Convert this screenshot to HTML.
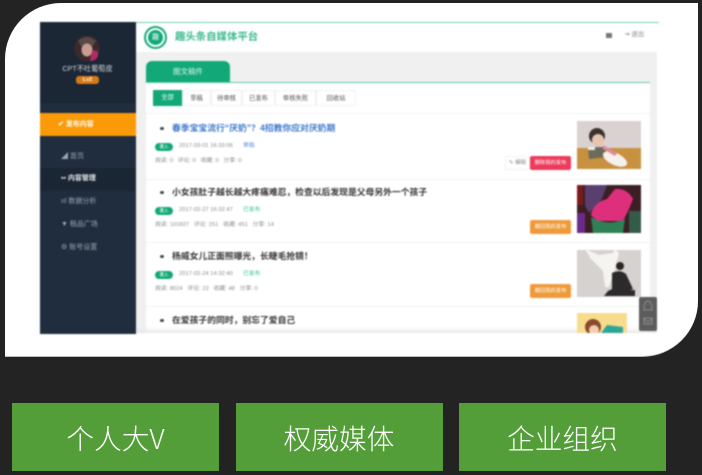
<!DOCTYPE html>
<html lang="zh"><head><meta charset="utf-8"><style>
html,body{margin:0;padding:0;width:702px;height:475px;overflow:hidden;background:#232323}
*{box-sizing:border-box}
body{font-family:"Liberation Sans","Noto Sans CJK SC",sans-serif;position:relative}
div,span{position:absolute;white-space:nowrap}
#card{left:5px;top:3px;width:693px;height:354px;background:#fff;border-radius:56px 0 56px 0;border-bottom:1px solid #bbb}
#shot{left:0;top:0;width:702px;height:357px;filter:blur(.8px)}
.t{font-weight:bold;font-size:8.8px;line-height:12px;color:#333;left:172px}
.m{font-size:5.8px;line-height:7px;color:#8a8a8a}
.g{left:155px;width:18px;height:8px;border-radius:4px;background:#12a878;color:#fff;font-size:4.5px;line-height:8px;text-align:center}
.dot{left:160px;width:4px;height:2.5px;border-radius:50%;background:#444}
.hr{left:146px;width:504px;height:1px;background:#f2f2f2}
.f{top:90px;height:16px;font-size:6.3px;line-height:16px;text-align:center;color:#555;border:1px solid #f0f0f0}
.n{left:61px;font-size:7px;line-height:9px;color:#9aa5b1}
.b{left:530px;width:41px;height:14px;border-radius:2px;background:#ef9a3a;color:#fff;font-size:5.3px;line-height:14px;text-align:center}
.big{top:403px;width:207px;height:68px;background:#539e38;color:#fff;font-size:27.7px;line-height:68px;text-align:center;font-weight:300;font-family:"WenQuanYi Zen Hei","Noto Sans CJK SC",sans-serif}
</style></head><body>
<div id="card"></div>
<div id="shot">
<div style="left:135px;top:22px;width:524px;height:30px;background:#fff;border-top:1px solid #6fd0b0"></div>
<div style="left:135px;top:52px;width:522px;height:281px;background:#f0f0f0"></div>
<div style="left:146px;top:83px;width:504px;height:250px;background:#fff"></div>
<div style="left:135px;top:327px;width:522px;height:6px;background:linear-gradient(#fff0,#e8e8e8)"></div>

<div style="left:39.5px;top:22px;width:96px;height:311.5px;background:#1f2d3e"></div>
<div style="left:39.5px;top:22px;width:96px;height:81px;background:#1b2735"></div>
<div style="left:39.5px;top:113px;width:96px;height:23px;background:#fb9a08"></div>
<div style="left:39.5px;top:168px;width:96px;height:23px;background:#1a2634"></div>
<svg style="position:absolute;left:74px;top:35px" width="26" height="27" viewBox="0 0 26 27"><circle cx="13" cy="13.5" r="13" fill="#3a2a2c"/><path d="M4 6Q13-2 22 6L18 12 8 12Z" fill="#5a4a44"/><ellipse cx="13" cy="15" rx="5.5" ry="6.5" fill="#c99c90"/><path d="M18 16Q25 14 24 20T16 26Z" fill="#b32a66"/></svg>
<div style="left:39.5px;top:64px;width:96px;text-align:center;font-size:7.2px;line-height:9px;color:#d5dae0">CPT不吐葡萄皮</div>
<div style="left:76px;top:75.5px;width:23px;height:8px;border-radius:3px;background:#d9791a;color:#ffe;font-size:5.5px;line-height:8px;text-align:center;font-weight:bold">Lv2</div>
<div style="left:58px;top:120px;font-size:7px;line-height:9px;color:#fff;font-weight:bold">✔ 发布内容</div>
<div class="n" style="top:152px">◢ 首页</div>
<div class="n" style="top:174px;color:#e6e9ec;font-weight:bold">▪▪ 内容管理</div>
<div class="n" style="top:197px">ııl 数据分析</div>
<div class="n" style="top:220px">▼ 租品广场</div>
<div class="n" style="top:243px">⚙ 账号设置</div>

<div style="left:144px;top:26px;width:23px;height:23px;border-radius:50%;border:2.5px solid #12a878;background:#fff"></div>
<div style="left:148px;top:30px;width:15px;height:15px;border-radius:50%;background:#12a878"></div>
<div style="left:152px;top:33px;font-size:7px;line-height:9px;color:#bfeadb;font-weight:bold">趣</div>
<div style="left:175px;top:31px;font-size:10.4px;line-height:14px;color:#3bb98f;font-weight:bold">趣头条自媒体平台</div>
<div style="left:606px;top:33px;width:6px;height:5px;background:#777"></div>
<div style="left:624px;top:31px;font-size:6.5px;line-height:8px;color:#888">⇥ 退出</div>

<div style="left:146px;top:61px;width:84px;height:21px;background:#12a878;border-radius:6px 6px 0 0;color:#dff5ec;font-size:7.5px;line-height:21px;text-align:center">图文稿件</div>
<div style="left:146px;top:81.5px;width:504px;height:1.5px;background:#5fcba8"></div>

<div class="f" style="left:153px;width:29px;background:#12a878;color:#fff;border:0">全部</div>
<div class="f" style="left:182px;width:29px">草稿</div>
<div class="f" style="left:211px;width:31px">待审核</div>
<div class="f" style="left:242px;width:33px">已发布</div>
<div class="f" style="left:275px;width:41px">审核失败</div>
<div class="f" style="left:316px;width:40px">回收站</div>
<div class="hr" style="top:113px"></div>
<div class="hr" style="top:179px"></div>
<div class="hr" style="top:242px"></div>
<div class="hr" style="top:306px"></div>

<div class="dot" style="top:127px"></div>
<div class="t" style="top:122px;color:#3f78c9">春季宝宝流行“厌奶”？4招教你应对厌奶期</div>
<div class="g" style="top:143px">署入</div>
<div class="m" style="left:179px;top:143px">2017-03-01 16:33:06</div>
<div class="m" style="left:243px;top:143px;color:#5b8fd8">草稿</div>
<div class="m" style="left:155px;top:158px">阅读: 0 &nbsp; 评论: 0 &nbsp; 收藏: 0 &nbsp; 分享: 0</div>
<div style="left:505px;top:156px;width:25px;height:14px;border:1px solid #f0f0f0;font-size:5.5px;line-height:12px;text-align:center;color:#888">✎ 编辑</div>
<div class="b" style="top:156px;background:#ed3b5c">删除我的发布</div>
<svg style="position:absolute;left:577px;top:121px" width="64" height="48" viewBox="0 0 64 48"><rect width="64" height="48" fill="#d9d2d0"/><rect y="27" width="64" height="21" fill="#c8913f"/><circle cx="20" cy="15" r="8" fill="#3b3230"/><ellipse cx="21" cy="19" rx="6" ry="6" fill="#e8c3ae"/><path d="M11 26H28L30 36 12 38Z" fill="#6b6b58"/><path d="M11 26H18V29H11Z" fill="#f0ede6"/><ellipse cx="38" cy="38" rx="13" ry="6" fill="#f5f1ed" transform="rotate(25 38 38)"/><path d="M26 24L40 32 38 35 26 28Z" fill="#e08a98"/></svg>

<div class="dot" style="top:191px"></div>
<div class="t" style="top:186px">小女孩肚子越长越大疼痛难忍，检查以后发现是父母另外一个孩子</div>
<div class="g" style="top:206.5px">署入</div>
<div class="m" style="left:179px;top:207px">2017-02-27 16:32:47</div>
<div class="m" style="left:243px;top:207px;color:#30c08f">已发布</div>
<div class="m" style="left:155px;top:221.5px">阅读: 101827 &nbsp; 评论: 251 &nbsp; 收藏: 451 &nbsp; 分享: 14</div>
<div class="b" style="top:220px">撤回我的发布</div>
<svg style="position:absolute;left:577px;top:185px" width="64" height="48" viewBox="0 0 64 48"><rect width="64" height="48" fill="#3c1f24"/><path d="M8 0H30L24 16 12 28 8 20Z" fill="#5a3f6e"/><rect x="0" y="0" width="6" height="20" fill="#7a1a1a"/><rect x="0" y="28" width="8" height="20" fill="#6a2a8a"/><rect x="52" y="26" width="12" height="22" fill="#345a48"/><path d="M14 30Q16 18 30 14L38 4Q50 3 56 14L52 24 46 36 20 36Z" fill="#de2f7d"/><path d="M14 32Q30 42 48 34L46 48H16Z" fill="#2f8055"/></svg>

<div class="dot" style="top:255px"></div>
<div class="t" style="top:250px">杨威女儿正面照曝光，长睫毛抢镜！</div>
<div class="g" style="top:270.5px">署入</div>
<div class="m" style="left:179px;top:271px">2017-02-24 14:32:40</div>
<div class="m" style="left:243px;top:271px;color:#30c08f">已发布</div>
<div class="m" style="left:155px;top:286px">阅读: 8024 &nbsp; 评论: 22 &nbsp; 收藏: 48 &nbsp; 分享: 0</div>
<div class="b" style="top:284px">撤回我的发布</div>
<svg style="position:absolute;left:577px;top:249px" width="64" height="48" viewBox="0 0 64 48"><rect y="1" width="64" height="47" fill="#d5d2cf"/><path d="M8 0L22 6 36 4 38 0 42 4 38 20 32 38 28 38 26 22 14 10Z" fill="#f6f4f1"/><circle cx="43" cy="17" r="4" fill="#2b2522"/><path d="M35 24Q43 20 49 25L56 40 53 41H58V47H27L31 42 35 40Z" fill="#2c2a2a"/></svg>

<div class="dot" style="top:319px"></div>
<div class="t" style="top:314px">在爱孩子的同时，别忘了爱自己</div>
<svg style="position:absolute;left:577px;top:313px" width="50" height="20" viewBox="0 0 50 20"><rect width="50" height="20" fill="#f8dc8e"/><circle cx="16" cy="14" r="8" fill="#8a4a2a"/><circle cx="17" cy="17" r="5" fill="#f3cdb0"/><path d="M24 20L30 12 46 14V20Z" fill="#2fa59a"/></svg>

<div style="left:639px;top:297px;width:18px;height:34px;background:#5c5c5c;border-radius:2px"></div>
<svg style="position:absolute;left:639px;top:297px" width="18" height="34" viewBox="0 0 18 34" fill="none" stroke="#8e8e8e" stroke-width="1"><path d="M5 13Q5 4 9 4T13 13Z"/><rect x="5" y="21" width="8" height="6"/><path d="M5 22L9 25 13 22"/></svg>
</div>

<div class="big" style="left:12px">个人大V</div>
<div class="big" style="left:235.5px">权威媒体</div>
<div class="big" style="left:459px">企业组织</div>
</body></html>
